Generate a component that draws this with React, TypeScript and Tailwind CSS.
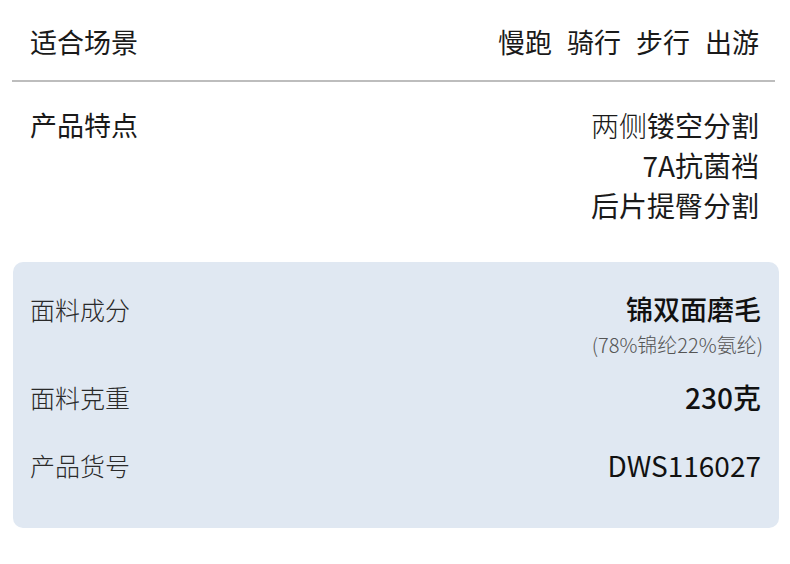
const font = { fontFamily: '"Noto Sans CJK SC", "Noto Sans", sans-serif' };

function SpecRow({ label, children }: { label: string; children: React.ReactNode }) {
  return (
    <div className="flex items-start justify-between">
      <span className="text-[25px] leading-[40px] font-light text-[#2a2a2a]">{label}</span>
      <div className="flex flex-col items-end">{children}</div>
    </div>
  );
}

export default function App() {
  return (
    <div className="w-[790px] h-[564px] bg-white" style={font}>
      <div className="pl-3 pr-[15px]">
        {/* 适合场景 */}
        <div className="h-[82px] flex items-center justify-between pl-[18px] pr-[16px] pt-[4px] border-b-2 border-[#bdbdbd]">
          <span className="text-[27px] text-[#1a1a1a]">适合场景</span>
          <div className="flex gap-[15px] text-[27px] text-[#1a1a1a]">
            <span>慢跑</span>
            <span>骑行</span>
            <span>步行</span>
            <span>出游</span>
          </div>
        </div>

        {/* 产品特点 */}
        <div className="flex justify-between pl-[18px] pr-[16px] pt-[23px] pb-[37px]">
          <span className="text-[27px] leading-[40px] text-[#1a1a1a]">产品特点</span>
          <div className="flex flex-col items-end text-[28px] leading-[40px] text-[#1a1a1a]">
            <span>
              <span className="font-light">两侧</span>
              <span>镂空分割</span>
            </span>
            <span>7A抗菌裆</span>
            <span>后片提臀分割</span>
          </div>
        </div>
      </div>

      {/* 面料信息 */}
      <div className="ml-[13px] mr-[11px] rounded-[10px] bg-[#e0e8f2] pl-[17px] pr-[18px] pt-[27px] pb-[43px] flex flex-col">
        <SpecRow label="面料成分">
          <span className="text-[27px] leading-[40px] font-medium text-[#111]">锦双面磨毛</span>
          <span className="text-[20px] leading-[32px] font-light text-[#555] -mr-[2px]">(78%锦纶22%氨纶)</span>
        </SpecRow>
        <div className="mt-[16px]">
          <SpecRow label="面料克重">
            <span className="text-[28px] leading-[40px] font-medium text-[#111]">230克</span>
          </SpecRow>
        </div>
        <div className="mt-[28px]">
          <SpecRow label="产品货号">
            <span className="text-[28px] leading-[40px] text-[#111]">DWS116027</span>
          </SpecRow>
        </div>
      </div>
    </div>
  );
}
